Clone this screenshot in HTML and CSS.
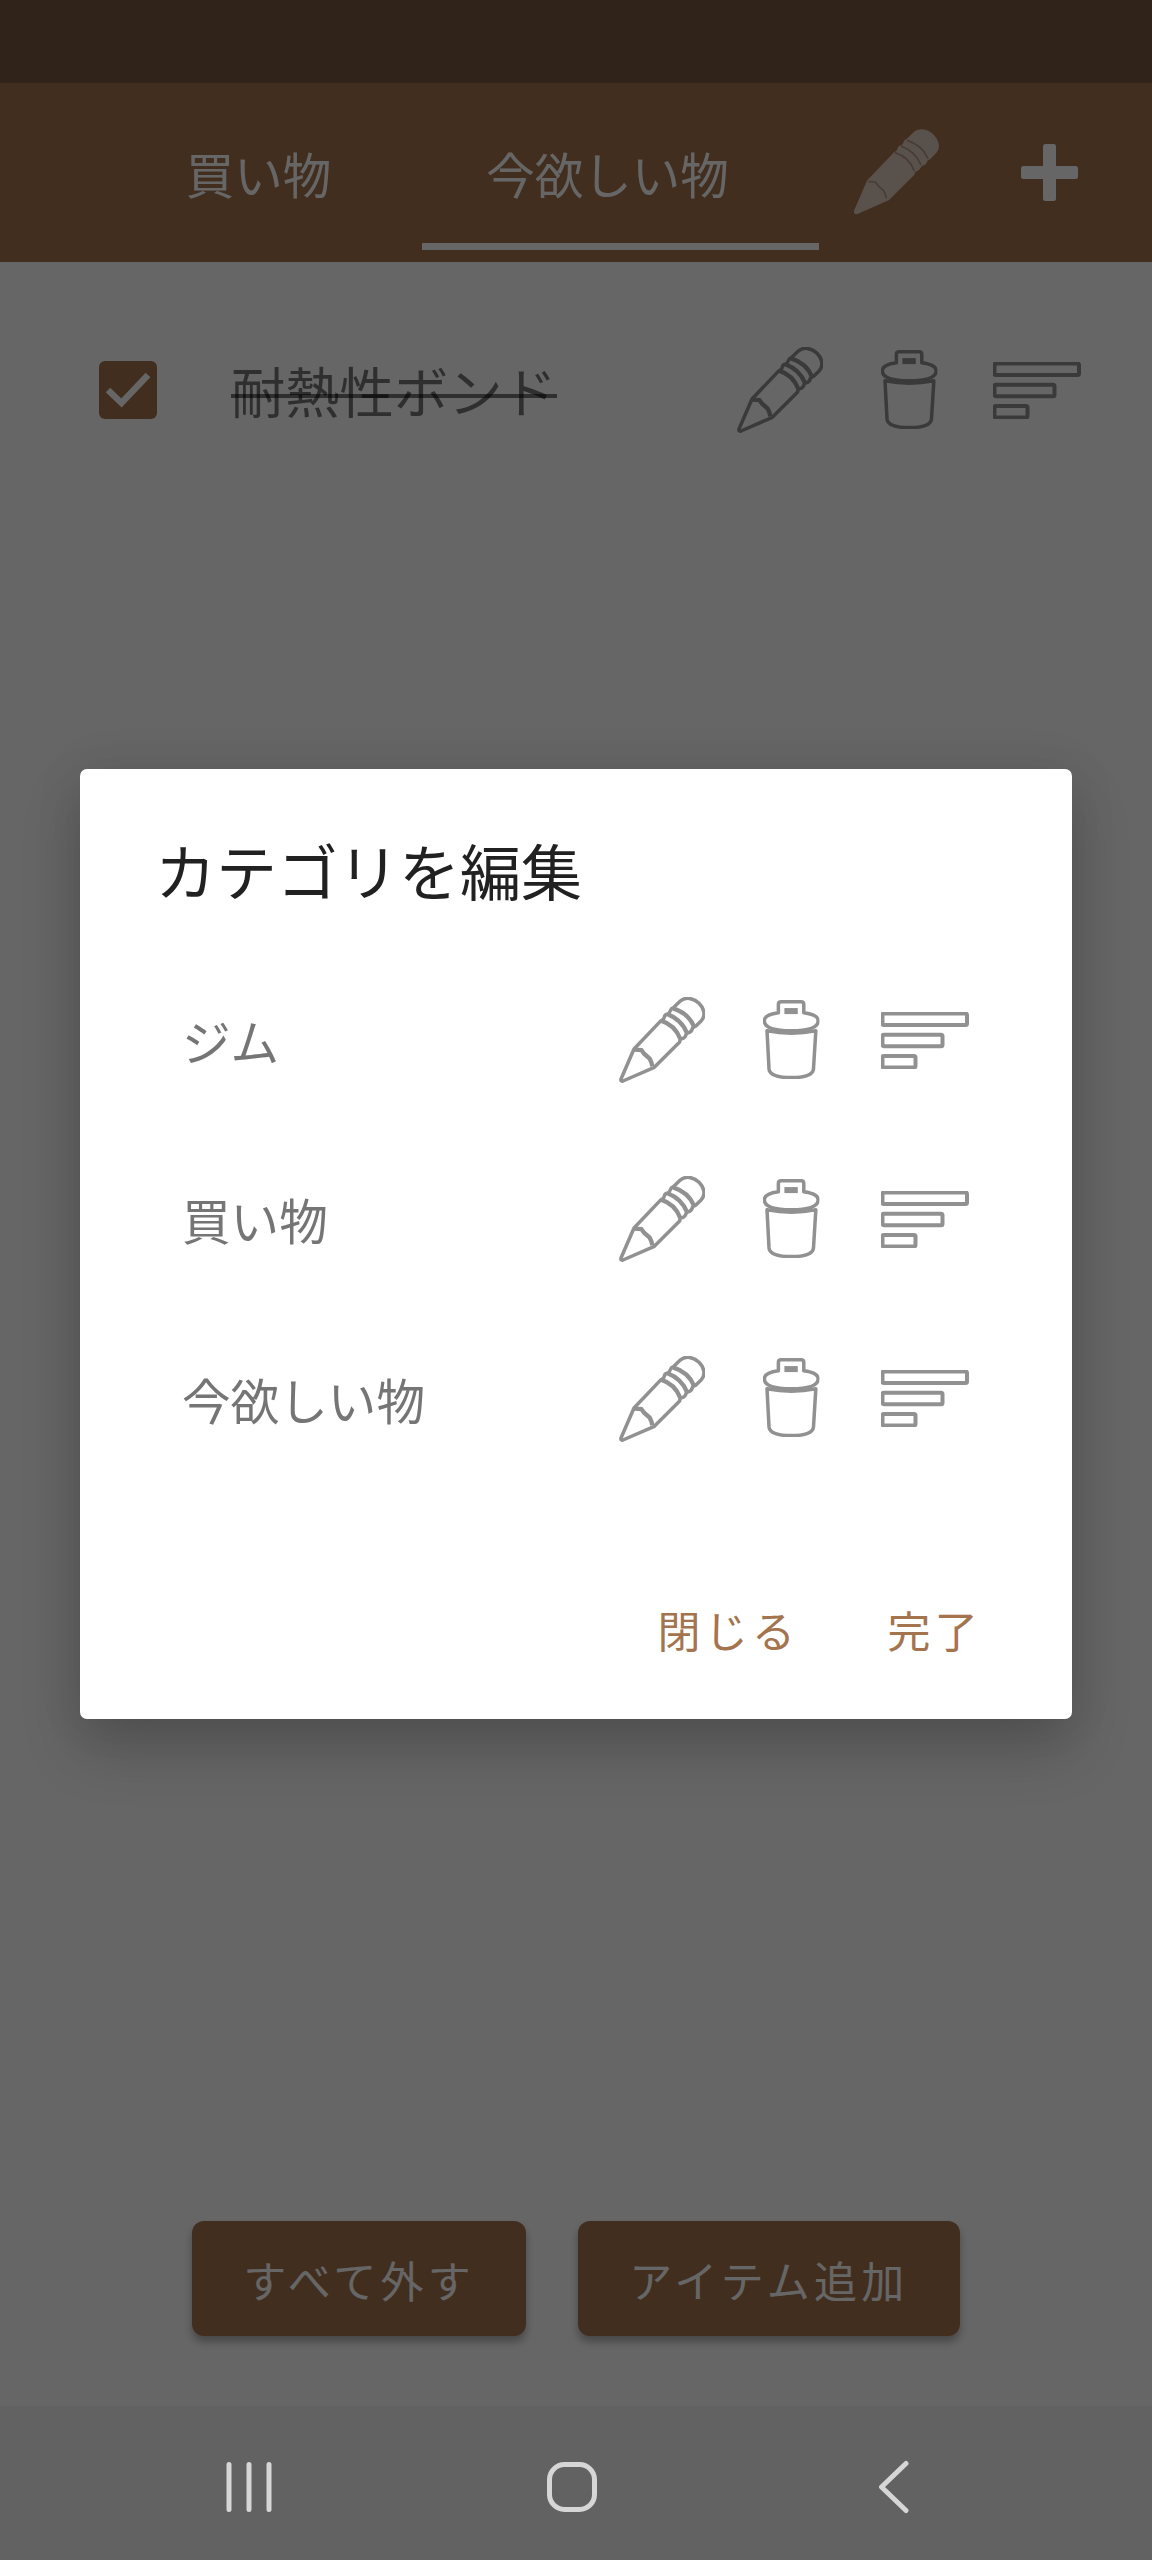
FILE: index.html
```html
<!DOCTYPE html>
<html lang="ja">
<head>
    <meta charset="UTF-8">
    <meta name="viewport" content="width=device-width, initial-scale=1.0">
    <title>買い物リスト</title>
    <link rel="stylesheet" href="styles.css">
</head>
<body>
    <svg class="defs" width="0" height="0">
        <symbol id="pencil" viewBox="0 0 258 258">
            <path class="shape" d="M6 246L45 156L126 71Q134 70 136 60Q138 52 146 51Q152 49 154 41Q156 34 163 32L183 13C199 -2 224 3 240 19C255 34 261 55 247 71L230 88Q220 90 219 98Q216 106 208 107Q201 108 200 116Q196 124 188 125Q182 127 182 135L106 211L12 252Q4 254 6 246Z"/>
            <path class="band" d="M126 71Q168 84 184 126M144 51Q188 68 204 108M162 34Q208 48 225 89M46 158L67 159L76 171L92 185L97 196L100 208"/>
        </symbol>
        <symbol id="trash" viewBox="0 0 169 236">
            <path class="shape" d="M46 38V13Q46 5 54 5H114Q122 5 122 13V38C152 42 165 50 165 62C165 84 130 92 85 92C40 92 4 84 4 62C4 50 16 42 46 38Z"/>
            <path class="shape" d="M12 92L18 206Q20 232 85 232Q149 232 151 206L158 92Q85 106 12 92Z"/>
            <rect class="hole" x="64" y="24" width="40" height="18"/>
        </symbol>
        <symbol id="sort" viewBox="0 0 88 57">
            <rect class="shape" x="1.5" y="1.5" width="84.5" height="11.5" rx="1.5"/>
            <rect class="shape" x="1.5" y="22.7" width="60" height="11.5" rx="1.5"/>
            <rect class="shape" x="1.5" y="44" width="33" height="11.5" rx="1.5"/>
        </symbol>
    </svg>

    <div class="screen">
        <div class="status-bar"></div>
        <header class="toolbar">
            <div class="tab">買い物</div>
            <div class="tab active">今欲しい物</div>
            <svg class="icon pencil filled"><use href="#pencil"/></svg>
            <svg class="plus" viewBox="0 0 57 57">
                <rect x="22" y="0" width="13" height="57" rx="2.5"/>
                <rect x="0" y="22" width="57" height="13" rx="2.5"/>
            </svg>
        </header>

        <main class="list">
            <div class="item">
                <span class="checkbox">
                    <svg viewBox="0 0 58 58"><path d="M9 29L22.5 42L49 14"/></svg>
                </span>
                <span class="item-name">耐熱性ボンド</span>
                <svg class="icon pencil"><use href="#pencil"/></svg>
                <svg class="icon trash"><use href="#trash"/></svg>
                <svg class="icon sort"><use href="#sort"/></svg>
            </div>
        </main>

        <div class="buttons">
            <button>すべて外す</button>
            <button>アイテム追加</button>
        </div>
    </div>

    <div class="scrim">
        <div class="dialog">
            <h2>カテゴリを編集</h2>
            <div class="category">
                <span class="category-name">ジム</span>
                <svg class="icon pencil"><use href="#pencil"/></svg>
                <svg class="icon trash"><use href="#trash"/></svg>
                <svg class="icon sort"><use href="#sort"/></svg>
            </div>
            <div class="category">
                <span class="category-name">買い物</span>
                <svg class="icon pencil"><use href="#pencil"/></svg>
                <svg class="icon trash"><use href="#trash"/></svg>
                <svg class="icon sort"><use href="#sort"/></svg>
            </div>
            <div class="category">
                <span class="category-name">今欲しい物</span>
                <svg class="icon pencil"><use href="#pencil"/></svg>
                <svg class="icon trash"><use href="#trash"/></svg>
                <svg class="icon sort"><use href="#sort"/></svg>
            </div>
            <div class="actions">
                <button>閉じる</button>
                <button>完了</button>
            </div>
        </div>
        <nav class="nav-bar">
            <svg class="nav-icon" viewBox="0 0 54 54"><path d="M7 4.5V49.5M27 4.5V49.5M47 4.5V49.5"/></svg>
            <svg class="nav-icon" viewBox="0 0 54 54"><rect x="4.5" y="4.5" width="45" height="45" rx="15"/></svg>
            <svg class="nav-icon" viewBox="0 0 54 54"><path d="M39 3.5L14.5 27L39 50.5"/></svg>
        </nav>
    </div>
</body>
</html>
```
FILE: styles.css
```css
* {
    box-sizing: border-box;
}
body {
    margin: 0;
    background-color: #fff;
    font-family: "Noto Sans CJK JP", sans-serif;
}
.defs {
    display: block;
}
button {
    border: none;
    background: none;
    margin: 0;
    padding: 0;
    font-family: inherit;
    font-size: 43px;
    letter-spacing: 4.3px;
    cursor: pointer;
}
.screen {
    display: flex;
    flex-direction: column;
    height: 2560px;
}
.status-bar {
    height: 83px;
    background-color: #785842;
}
.toolbar {
    display: flex;
    align-items: flex-start;
    height: 179px;
    padding-left: 95px;
    background-color: #a4744e;
}
.tab {
    height: 167px;
    padding: 0 63px;
    width: 327px;
    text-align: center;
    line-height: 181px;
    font-size: 48.5px;
    white-space: nowrap;
    color: #fff;
}
.tab.active {
    width: 397px;
    padding: 0 76px 0 50px;
    border-bottom: 7px solid #fff;
}

/* icons */
.icon {
    flex: none;
    overflow: visible;
    fill: none;
    stroke: #919191;
    stroke-width: 10.5;
    stroke-linejoin: round;
}
.icon.pencil {
    width: 86px;
    height: 86px;
}
.icon.trash {
    width: 56.5px;
    height: 79px;
    margin: -2px 0 0 57.5px;
}
.icon.sort {
    width: 88px;
    height: 57px;
    margin-left: 62px;
    stroke-width: 4;
}
.band {
    stroke: var(--band, #919191);
    stroke-width: var(--band-width, 13);
    stroke-linejoin: miter;
}
.hole {
    fill: #919191;
    stroke: none;
}
.icon.filled {
    --band: #b39683;
    --band-width: 5;
    margin: 46px 0 0 34px;
    fill: #dfcabd;
    stroke: #dfcabd;
    stroke-width: 6;
}
.plus {
    width: 57px;
    height: 57px;
    margin: 61px 0 0 82px;
    fill: #fff;
}

/* list */
.list {
    flex: 1;
    padding-top: 82px;
}
.item {
    display: flex;
    align-items: center;
    height: 92px;
    padding-left: 99px;
}
.item .icon.sort {
    margin: 1px 0 0 56px;
}
.checkbox {
    width: 58px;
    height: 58px;
    border-radius: 6px;
    background-color: #a4744e;
}
.checkbox svg {
    display: block;
    fill: none;
    stroke: #fff;
    stroke-width: 6.5;
}
.item-name {
    position: relative;
    width: 326px;
    margin: 0 180px 0 74px;
    font-size: 54.3px;
    line-height: 92px;
    white-space: nowrap;
    color: rgba(0, 0, 0, 0.54);
}
/* strike line of a checked item */
.item-name::after {
    content: "";
    position: absolute;
    top: 50px;
    left: 0;
    width: 100%;
    height: 4px;
    background-color: rgba(0, 0, 0, 0.54);
}
.buttons {
    display: flex;
    justify-content: center;
    gap: 52px;
    height: 339px;
}
.buttons button {
    height: 115px;
    padding: 0 51px;
    border-radius: 12px;
    background-color: #a4744e;
    color: #fff;
    box-shadow: 0 6px 8px rgba(0, 0, 0, 0.3);
}

/* dialog */
.scrim {
    position: absolute;
    top: 0;
    left: 0;
    display: flex;
    flex-direction: column;
    width: 100%;
    height: 2560px;
    padding-top: 769px;
    background-color: rgba(0, 0, 0, 0.6);
}
.dialog {
    height: 950px;
    margin: 0 80px;
    padding-top: 55px;
    border-radius: 7px;
    background-color: #fff;
    box-shadow: 0 30px 60px rgba(0, 0, 0, 0.2), 0 0 50px rgba(0, 0, 0, 0.08);
}
.dialog h2 {
    margin: 0 0 66px 75px;
    font-size: 61px;
    font-weight: 400;
    line-height: 92px;
    color: #212121;
}
.category {
    display: flex;
    align-items: center;
    height: 116px;
    margin-bottom: 63.3px;
    padding-left: 102px;
}
.category-name {
    width: 437px;
    font-size: 48.6px;
    color: #757575;
}
.actions {
    display: flex;
    justify-content: flex-end;
    gap: 88px;
    padding: 77px 90px 0 0;
}
.actions button {
    line-height: 64px;
    color: #a4744e;
}

/* system navigation */
.nav-bar {
    display: flex;
    align-items: center;
    justify-content: space-between;
    height: 154px;
    margin-top: auto;
    padding: 8px 231px 0 222px;
    background-color: rgba(0, 0, 0, 0.04);
}
.nav-icon {
    width: 54px;
    height: 54px;
    fill: none;
    stroke: #d6d6d6;
    stroke-width: 5;
    stroke-linecap: round;
    stroke-linejoin: round;
}
```
